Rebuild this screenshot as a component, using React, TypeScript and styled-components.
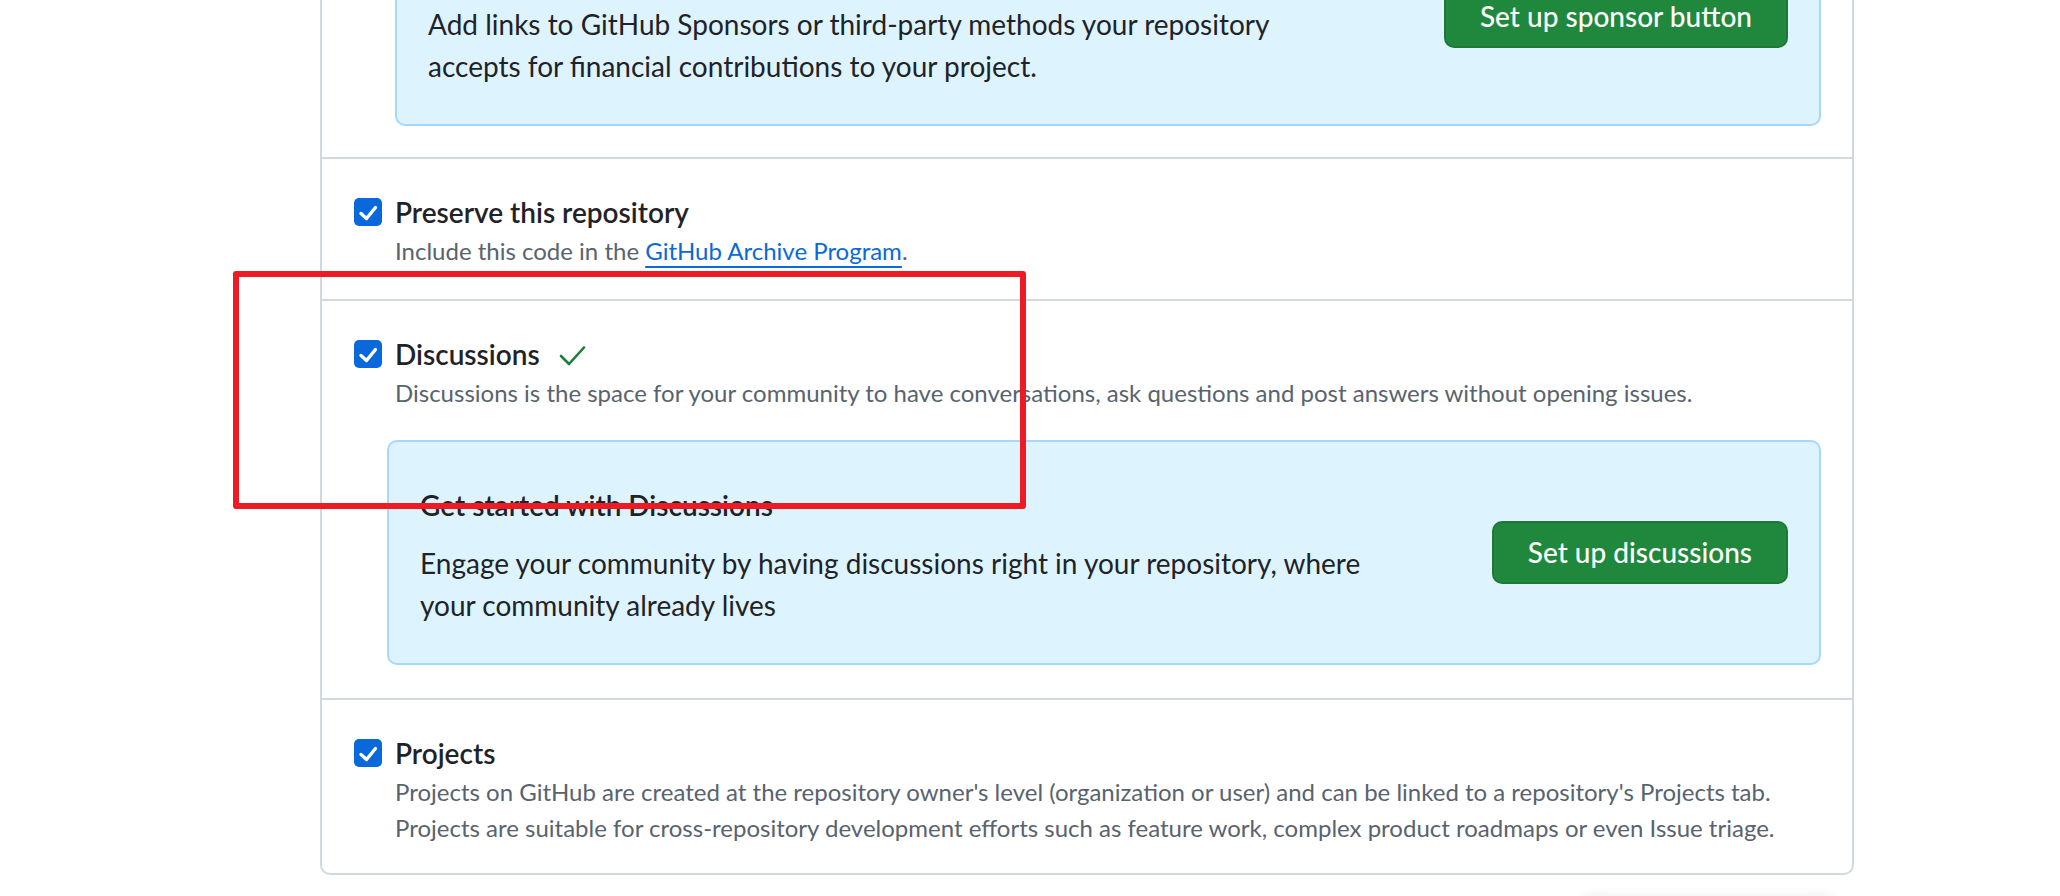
import React from "react";
import styled, { createGlobalStyle } from "styled-components";

const GlobalStyle = createGlobalStyle`
  html, body {
    margin: 0;
    padding: 0;
    background: #ffffff;
  }
  body {
    font-family: Lato, "Noto Sans", sans-serif;
    color: #1f2328;
  }
  * {
    box-sizing: border-box;
  }
`;

const Viewport = styled.div`
  position: relative;
  height: 896px;
  overflow: hidden;
`;

// the screenshot is scrolled: the top of the card sits above the window
const Main = styled.main`
  margin-top: -132px;
  padding-left: 320px;
`;

const Card = styled.section`
  width: 1534px;
  border: 2px solid #d1d9e0;
  border-radius: 10px;
  background: #ffffff;
`;

const Row = styled.div<{ $pb: number }>`
  padding: 32px 31px ${(p) => p.$pb}px 32px;

  & + & {
    border-top: 2px solid #d1d9e0;
  }
`;

const CheckLine = styled.div`
  display: flex;
  align-items: flex-start;
  gap: 13px;
`;

const Checkbox = styled.span`
  flex: 0 0 28px;
  width: 28px;
  height: 28px;
  margin-top: 7px;
  border-radius: 5px;
  background: #0969da;
  display: flex;
  align-items: center;
  justify-content: center;
`;

const Body = styled.div`
  display: flex;
  flex-direction: column;
  flex: 1;
`;

const Title = styled.div`
  display: flex;
  align-items: center;
  font-size: 28px;
  line-height: 42px;
  font-weight: 600;
  color: #1f2328;
`;

const Description = styled.p`
  margin: 0;
  font-size: 24px;
  line-height: 35.5px;
  color: #59636e;
`;

const Link = styled.a`
  color: #0969da;
  text-decoration: underline;
  text-decoration-thickness: 1.5px;
  text-underline-offset: 6px;
`;

const Done = styled.svg`
  margin-left: 19px;
  margin-top: 4px;
`;

const Callout = styled.div<{ $top: number; $indent: number }>`
  margin: ${(p) => p.$top}px 0 0 ${(p) => p.$indent}px;
  padding: 42px 31px 37px 31px;
  background: #ddf4ff;
  border: 2px solid #a6d8ff;
  border-radius: 10px;
  display: flex;
  align-items: center;
  justify-content: space-between;
  gap: 24px;
`;

const CalloutText = styled.div<{ $max: number; $offset?: number }>`
  max-width: ${(p) => p.$max}px;
  padding-top: ${(p) => p.$offset ?? 0}px;
`;

const CalloutTitle = styled.h3`
  margin: 0 0 16px;
  font-size: 28px;
  line-height: 42px;
  font-weight: 600;
  color: #1f2328;
`;

const CalloutBody = styled.p`
  margin: 0;
  font-size: 28px;
  line-height: 42px;
  color: #1f2328;
`;

const PrimaryButton = styled.button<{ $lift: number }>`
  flex-shrink: 0;
  height: 63px;
  margin-bottom: ${(p) => p.$lift}px;
  padding: 0 34px;
  font-family: inherit;
  font-size: 28px;
  font-weight: 500;
  color: #ffffff;
  background: #1f883d;
  border: 2px solid rgba(31, 35, 40, 0.15);
  border-radius: 10px;
  white-space: nowrap;
  cursor: pointer;
`;

const Footer = styled.div`
  width: 1534px;
  display: flex;
  justify-content: flex-end;
  padding-right: 21px;
`;

const FloatingBar = styled.div`
  width: 252px;
  height: 60px;
  margin-top: 24px;
  border-radius: 10px;
  background: #ffffff;
  box-shadow: 0 0 14px rgba(31, 35, 40, 0.14);
`;

const Annotation = styled.div`
  position: absolute;
  left: 233px;
  top: 271px;
  width: 793px;
  height: 238px;
  border: 6px solid #ed1c24;
  border-radius: 3px;
  pointer-events: none;
`;

const Tick = () => (
  <svg width="28" height="28" viewBox="0 0 28 28" aria-hidden="true">
    <polyline
      points="7,15.5 12.5,20.5 21.5,9.5"
      fill="none"
      stroke="#ffffff"
      strokeWidth="3.4"
      strokeLinecap="round"
      strokeLinejoin="round"
    />
  </svg>
);

type FeatureProps = {
  title: string;
  done?: boolean;
  pb: number;
  children?: React.ReactNode;
  description: React.ReactNode;
};

const Feature = ({ title, done, pb, description, children }: FeatureProps) => (
  <Row $pb={pb}>
    <CheckLine>
      <Checkbox>
        <Tick />
      </Checkbox>
      <Body>
        <Title>
          {title}
          {done && (
            <Done width="27" height="21" viewBox="0 0 27 21" aria-hidden="true">
              <polyline
                points="2,11 10,19 25,2.5"
                fill="none"
                stroke="#1a7f37"
                strokeWidth="2.6"
                strokeLinecap="round"
                strokeLinejoin="round"
              />
            </Done>
          )}
        </Title>
        <Description>{description}</Description>
      </Body>
    </CheckLine>
    {children}
  </Row>
);

export default function App() {
  return (
    <Viewport>
      <GlobalStyle />
      <Main>
        <Card>
          {/* sponsorships row, scrolled mostly out of view */}
          <Row $pb={31}>
            <Callout $top={0} $indent={41}>
              <CalloutText $max={900} $offset={57}>
                <CalloutBody>
                  Add links to GitHub Sponsors or third-party methods your repository accepts for
                  financial contributions to your project.
                </CalloutBody>
              </CalloutText>
              <PrimaryButton $lift={1}>Set up sponsor button</PrimaryButton>
            </Callout>
          </Row>

          <Feature
            title="Preserve this repository"
            pb={30}
            description={
              <>
                Include this code in the <Link href="#">GitHub Archive Program</Link>.
              </>
            }
          />

          <Feature
            title="Discussions"
            done
            pb={33}
            description="Discussions is the space for your community to have conversations, ask questions and post answers without opening issues."
          >
            <Callout $top={30} $indent={33}>
              <CalloutText $max={990}>
                <CalloutTitle>Get started with Discussions</CalloutTitle>
                <CalloutBody>
                  Engage your community by having discussions right in your repository, where your
                  community already lives
                </CalloutBody>
              </CalloutText>
              <PrimaryButton $lift={6}>Set up discussions</PrimaryButton>
            </Callout>
          </Feature>

          <Feature
            title="Projects"
            pb={28}
            description={
              <>
                Projects on GitHub are created at the repository owner's level (organization or
                user) and can be linked to a repository's Projects tab.
                <br />
                Projects are suitable for cross-repository development efforts such as feature
                work, complex product roadmaps or even Issue triage.
              </>
            }
          />
        </Card>
        <Footer>
          <FloatingBar />
        </Footer>
      </Main>
      <Annotation />
    </Viewport>
  );
}
